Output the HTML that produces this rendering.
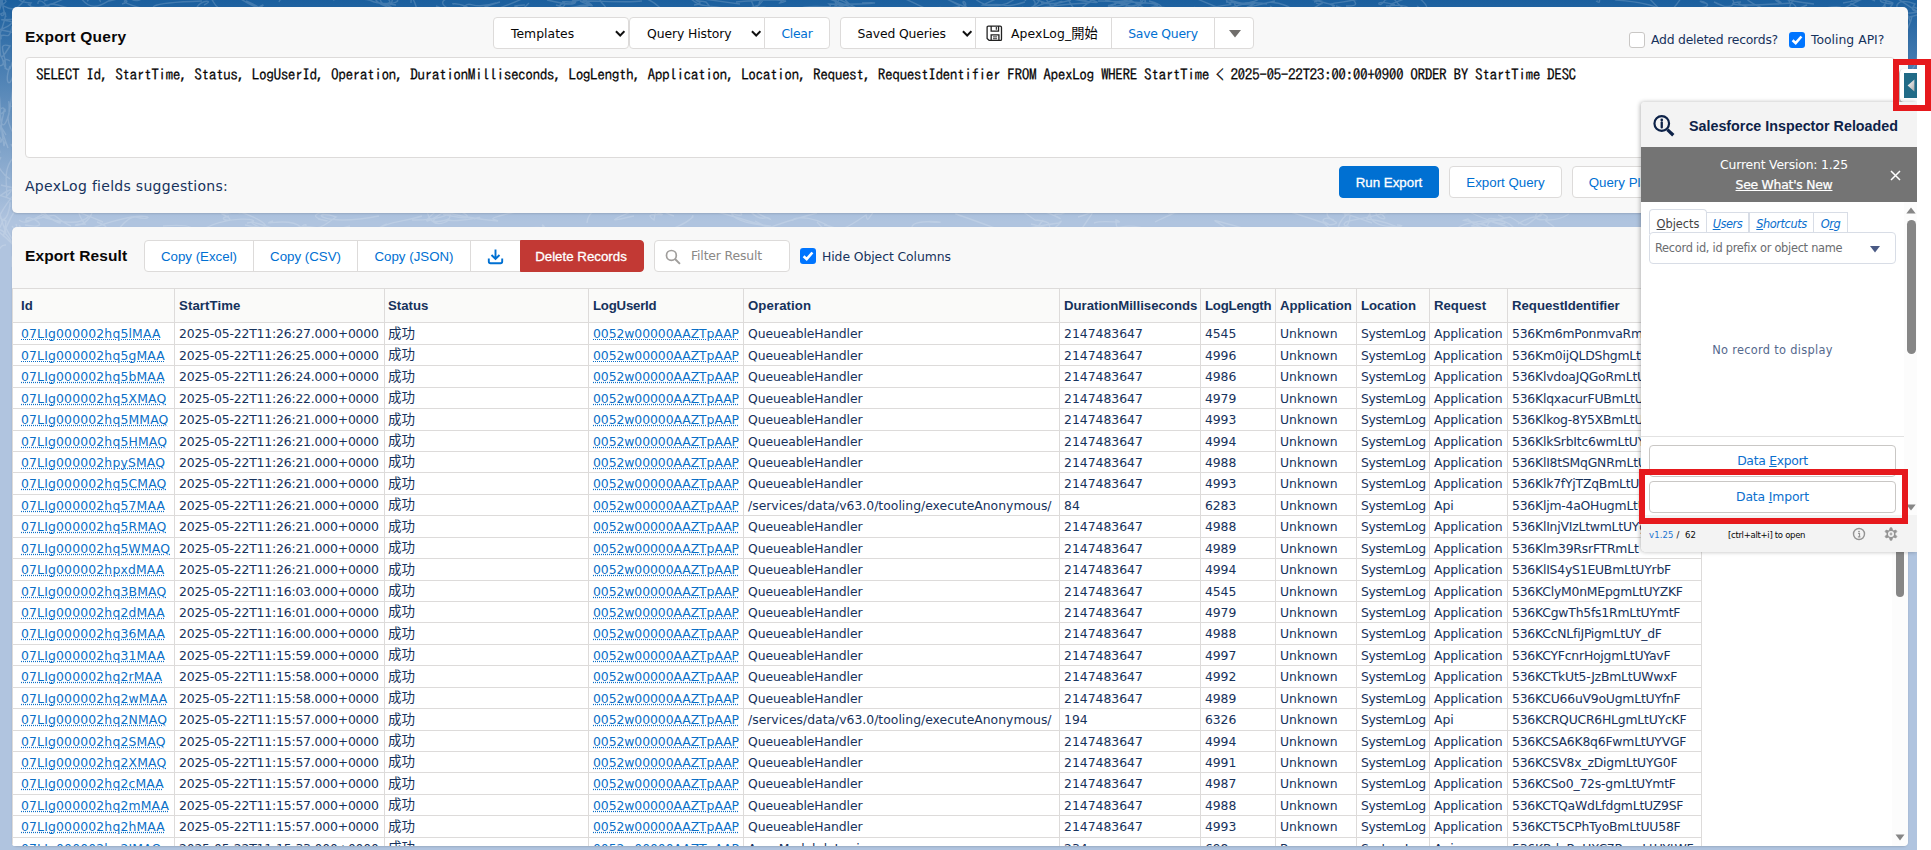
<!DOCTYPE html>
<html><head><meta charset="utf-8"><title>Data Export</title>
<style>
*{box-sizing:border-box;margin:0;padding:0}
html,body{width:1931px;height:850px;overflow:hidden;background:#fff}
body{font-family:"DejaVu Sans","Noto Sans CJK JP",sans-serif;font-size:12.4px;color:#080707;position:relative}
#page{position:absolute;left:0;top:0;width:1917px;height:850px;overflow:hidden;background:#b0c4df linear-gradient(to bottom,#1b5f9e 0,#b0c4df 222px) no-repeat;background-size:100% 222px}
.abs{position:absolute}
.panel{position:absolute;background:#f8f8f8;border-radius:5px;box-shadow:0 1px 2px rgba(0,0,0,.12)}
h1{font-family:"Liberation Sans",sans-serif;position:absolute;font-size:15.5px;font-weight:bold;color:#080707;white-space:nowrap;line-height:20px}
.box{position:absolute;background:#fff;border:1px solid #dddbda;height:32px;top:17px;line-height:31px;white-space:nowrap;font-size:12.4px}
.blue{color:#0070d2}
.btn{font-family:"Liberation Sans",sans-serif;position:absolute;background:#fff;border:1px solid #dddbda;color:#0070d2;text-align:center;white-space:nowrap;font-size:13.3px}
svg{position:absolute;display:block}
table{border-collapse:collapse;position:absolute;left:12px;top:288px;table-layout:fixed;width:1690px;background:#fff}
th,td{border:1px solid #dddbda;padding:0 0 0 4px;white-space:nowrap;overflow:hidden;text-align:left;font-size:12.4px;color:#16325c}
th{font-family:"Liberation Sans",sans-serif;background:#fafaf9;font-weight:bold;color:#16325c;height:34px;font-size:13.2px}
td:first-child,th:first-child{padding-left:8px}
th:nth-child(3){padding-left:3px}
td a{color:#0b6fc7;text-decoration:underline dotted;text-underline-offset:1px}
td.jp{font-size:13.5px;padding-left:3px;position:relative;top:-2px}
td:nth-child(1){letter-spacing:.17px}
td:nth-child(2){letter-spacing:-.18px}
td:nth-child(4){letter-spacing:-.06px}
td:nth-child(5){letter-spacing:-.1px}
td.sv{letter-spacing:0}
td:nth-child(7){letter-spacing:-.09px}
td:nth-child(9){letter-spacing:-.4px}
td:nth-child(10){letter-spacing:-.07px}
td:nth-child(11){letter-spacing:-.21px}
th{letter-spacing:0}
th:nth-child(4),th:nth-child(7){letter-spacing:-.2px}
th:nth-child(2),th:nth-child(5){letter-spacing:.1px}

.tab{border:1px solid #d8dde6;border-bottom:none;background:#fff;font-size:11.4px;letter-spacing:-.45px;line-height:23px;text-align:center;color:#0b6fce;white-space:nowrap}
.pbtn{width:247px;height:32px;border:1px solid #c9c7c5;border-radius:4px;background:#fff;font-size:12.4px;line-height:30px;text-align:center;color:#0b6fce;white-space:nowrap}
</style></head><body>
<div id="page">
<svg style="left:0;top:0" width="1917" height="280" viewBox="0 0 1917 280" fill="none" stroke="#fff" stroke-opacity=".17" stroke-width="1.4"><path d="M862 3c30 -1 1 2 -33 1c9 8 -28 -6 -43 13M1332 -11c34 13 11 3 -36 -20c2 -12 -22 -7 -49 -2M839 10c1 4 -0 5 -4 -9c35 14 24 6 -19 -11M544 -10c19 -3 24 -3 48 15c-35 -8 29 -1 50 -4M122 4c19 -6 -29 -5 49 11c-27 -7 -28 -12 31 -14M1071 -0c-22 6 -26 4 -40 -3c-20 -6 33 8 -21 16M391 -2c25 4 -28 14 -30 -10c19 -5 -14 -12 -43 3M454 4c-9 -1 32 -0 8 15c-22 -10 29 9 -26 -13M1422 12c-21 13 27 3 -8 -17c-32 13 -18 6 -26 14M1143 -4c-23 6 -30 -8 6 15c8 -6 29 -8 -51 -10M849 -10c-23 -4 5 -10 -14 16c34 4 13 2 -38 -20M15 12c14 13 -34 4 -2 10c-13 14 -30 1 25 17M1417 6c21 12 -10 5 42 16c-6 8 25 2 13 -5M1116 4c-29 4 35 11 24 -5c16 2 -4 9 -44 11M38 4c-1 -8 14 -0 12 18c-17 -14 -14 5 -31 -14M1746 5c-4 11 -12 5 -32 -3c21 12 27 -3 9 -8M246 1c24 10 15 13 -23 -14c-3 -6 -20 -2 13 -0M595 10c34 -1 -30 -13 39 -19c15 2 -13 8 -50 -15M867 -11c23 -7 -25 -13 14 -2c9 4 22 13 19 -13M907 -7c-34 -1 15 -9 -24 -6c14 1 8 7 -11 12M1747 -10c30 6 -26 -1 13 17c-9 2 27 8 47 -2M1250 -7c16 9 10 6 -30 17c34 13 3 8 -19 17M1649 -3c-29 -2 4 8 -1 -20c22 -12 21 -9 -17 12M254 -8c1 6 24 5 47 -0c31 -12 -20 1 -22 10M1226 2c24 2 -13 -3 36 17c-20 10 33 1 8 -13M1025 1c7 -13 33 0 -10 13c4 -0 13 -12 4 -4M1846 12c-16 -1 -26 -2 33 17c-2 -5 -22 3 45 -16M1500 -11c-21 -8 13 -5 -15 5c-28 6 -26 0 -26 -13M1014 -1c-9 -2 2 -10 -31 6c10 1 25 3 37 -11M1425 9c28 -5 -13 12 -30 21c27 -10 -18 6 -25 -17M1603 -1c20 -10 -7 5 -51 -13c13 12 33 -11 1 11M960 6c-22 -12 -28 -13 5 1c5 -10 -22 -8 36 21M1787 -10c-31 13 -3 7 -18 -1c1 -2 7 -14 21 14M333 -0c17 -3 -21 -9 1 -20c28 8 14 10 14 -4M1149 1c34 9 -17 12 26 12c22 -3 28 11 20 11M1472 -1c16 -12 -11 -1 -51 -6c10 3 -19 12 17 -7M1267 3c2 -3 35 4 21 11c34 -13 8 7 -26 -4M78 -7c-9 -11 -17 11 5 0c33 2 35 4 33 -18M1145 8c-32 12 -24 -1 -35 -0c8 -12 31 -2 3 4M693 -5c11 2 -15 6 -21 -20c-18 -13 -24 7 -12 17M1439 -11c34 12 -30 11 -7 -1c33 -7 2 12 23 -1M1889 9c7 -11 9 -1 -31 -19c2 -11 -4 5 -5 -10M1115 -1c19 1 35 13 25 -11c-27 11 20 3 -15 -10M1316 3c6 4 18 -9 -26 20c29 11 -32 -12 -24 -3M1196 -9c3 -12 -29 5 5 6c-9 -1 -20 -4 26 14M125 -9c22 3 19 -8 -8 -10c22 -4 11 14 -18 2M1435 12c-5 -4 -28 11 -44 -18c4 -0 13 -6 29 -18M396 5c-29 -5 16 5 -23 -15c-10 6 -9 -11 22 3M1771 12c29 -2 21 -5 -19 -4c30 11 -18 -4 -14 -6M751 -2c-21 2 21 1 35 3c-23 7 27 -6 -50 1M1041 3c33 4 21 -12 5 12c-29 -12 17 11 -44 6M261 7c10 -7 -20 7 2 11c-7 -5 33 5 -1 2M1386 6c29 -3 23 5 37 13c23 11 32 4 3 9M1544 -1c-6 -10 17 14 -13 -14c-21 -2 -15 13 -46 -8M204 5c19 -9 -31 -1 9 17c-32 -11 -22 -8 -28 9M1140 -6c-22 -6 -23 7 -20 2c22 -1 -17 11 43 -7M1047 13c-1 -8 -32 13 32 -5c2 0 -16 14 17 -11M1 0c-9 8 15 3 -36 -14c-12 -7 26 0 14 21M500 2c-24 8 -35 9 36 14c-29 -6 15 -11 -2 -1M1843 3c25 -5 20 -2 44 -17c23 -8 3 1 -36 14M587 -4c-30 -5 -2 6 -15 8c-28 -3 -3 13 35 6M4 -2c15 -7 4 -1 -51 21c21 -8 8 -6 -13 2M562 -3c-8 5 -17 -8 24 -7c31 2 16 -5 34 -17M255 -10c12 6 -22 -3 35 4c-29 -8 -24 -11 -10 -18M1775 -1c1 4 19 9 -12 -7c-6 -14 -7 6 51 12M1267 4c-34 -5 -11 4 -41 -5c1 8 23 3 -36 11M1741 2c-10 0 -25 6 51 1c15 9 -21 12 13 -13M142 -6c5 6 -12 12 -15 -2c-26 13 -26 11 5 3M1073 -5c29 14 22 3 -40 14c-15 11 -18 2 35 -13M1048 -10c-33 -9 34 12 17 -8c12 7 -8 3 32 -20M369 0c-25 -3 5 -9 2 -10c5 -5 10 -13 18 -15M1851 4c-2 -2 9 5 27 11c-1 14 24 10 -10 -3M1084 12c2 1 -5 11 -19 -19c16 11 16 3 26 -8M1137 -10c-26 -1 0 -3 -47 8c2 -7 -14 -3 -28 -18M1757 13c12 10 -6 9 -29 10c5 11 -28 8 -40 2M1834 -12c-18 -6 -12 -12 41 13c-7 -4 6 -13 -49 17M580 1c30 13 -2 -8 -21 18c28 -9 24 -4 -3 -14M1695 14c-21 4 -22 11 -47 -17c16 -5 28 10 22 -15M1337 12c-4 -12 -19 -5 22 -13c-22 -7 12 8 -13 7M1705 3c-19 -6 30 5 -23 6c-29 14 -4 1 3 -19M1149 -5c-17 8 -29 -6 27 -11c-15 1 -22 11 51 -20M880 8c-8 12 -0 -9 6 6c-10 4 20 0 1 15M1314 2c32 -9 20 -9 11 -11c-4 8 20 8 -28 -0M411 3c-0 -13 7 6 8 16c-22 -10 -34 -0 -7 -2M493 9c-30 11 5 1 31 -11c-25 -5 -32 -5 13 1M496 3c-29 9 -23 -7 -36 8c23 8 -31 -3 -14 -12M1873 -11c-1 7 34 -10 -5 10c-32 -7 27 -10 -11 -8M808 -10c-33 14 18 7 -28 -10c4 -7 -3 12 -14 -7M1893 4c-32 -3 10 -12 -16 8c26 3 27 -1 -11 14M723 8c-20 -4 -22 1 -35 -12c-20 -1 -13 -1 52 8M1662 -7c-8 -12 13 -4 -24 -20c-22 -7 -7 12 23 -10M684 -8c31 -4 19 6 43 -20c-12 -3 -29 11 -18 11M993 -11c-7 -7 -32 -10 10 -20c-13 -2 3 -10 22 -10M1395 5c-25 -8 -15 6 -10 -5c26 -8 -15 -4 -30 -19M28 4c5 9 33 -6 18 18c-20 5 12 13 39 -11M1213 -10c-5 -3 -31 -3 -18 -0c-15 -10 -7 -1 -35 7M448 -10c-11 -2 -24 2 21 2c14 -13 -8 -4 -46 -4M87 1c6 -1 -12 -7 -50 -6c27 2 -17 5 -33 -1M1180 13c-10 2 31 8 13 5c-6 -2 -16 9 40 -5M1754 -11c-25 0 -13 -4 50 -15c-22 -8 13 -7 -52 2M748 -6c-0 4 3 3 6 14c33 -5 -11 11 -20 9M1336 6c32 9 -24 3 -1 3c-9 -6 17 1 -28 -11M614 -7c1 -10 -31 -12 -42 9c-27 -1 19 -1 -35 15M1676 -11c-17 0 21 -3 23 -10c15 -5 -12 7 36 14M1087 -1c14 3 23 8 -39 -5c12 -8 -22 -14 9 19M1872 -9c13 -2 9 -3 46 21c-32 6 -27 -13 -22 10M1918 -9c-12 -13 3 -0 -13 -8c21 9 -15 -3 12 11M1893 -2c14 1 21 -10 -34 -17c30 -7 -1 -11 -19 -20M1084 -8c9 -6 -19 -0 -14 -10c-31 -12 27 -5 -44 -13M923 14c-21 10 -1 -2 32 -4c-31 1 11 3 -23 18M1666 14c-4 9 16 -9 -50 -14c-27 -12 -10 7 -20 1M0 -7c32 -14 2 9 31 10c-7 8 23 7 51 -17M1833 -2c14 -7 29 -13 8 -11c-8 -4 11 9 -14 6M670 -5c28 -5 -28 -5 25 -12c17 1 13 -9 -41 -15M663 -1c-34 0 -7 -5 4 19c-21 11 -13 7 -41 20M819 13c-20 -3 14 -9 -24 7c31 -5 -22 -4 51 -15M1218 -2c10 -8 8 11 37 5c0 2 -27 9 20 -2M1278 -1c-8 -8 7 2 2 -20c9 -1 7 3 45 -15M894 14c17 -5 17 14 -10 15c-26 14 -1 -7 36 6M1809 10c21 0 35 -12 39 9c-17 9 -3 1 38 -13M525 5c-30 2 20 -0 -27 13c25 8 3 11 31 -15M693 -9c-32 -4 26 9 -40 -13c-8 10 8 11 -45 20M383 4c26 6 -21 5 -7 -20c-11 -5 9 -6 11 8M332 -9c14 -1 -26 -11 46 5c-10 -9 35 5 25 -6M585 -1c-25 4 -5 9 -10 -2c0 12 -11 6 -28 3M536 11c-15 10 12 -1 46 -5c17 3 -4 -12 -8 -9M840 13c-14 5 12 -7 -9 -15c28 -7 -6 -4 34 15M1132 2c-28 11 -29 -4 -13 9c12 -4 28 13 -50 6M895 -3c-2 -5 12 3 49 20c34 -3 23 4 21 21M110 0c-7 4 -20 14 -31 -5c-25 -3 17 -12 -35 6M1195 7c-17 9 16 8 -40 -1c-34 10 31 11 -50 -6M1025 2c-27 8 -14 0 -39 3c-26 -12 1 -6 29 -11M787 -11c-20 -1 4 -1 37 -17c25 -10 33 1 -10 5M1665 13c-6 -14 -24 9 25 9c-24 1 -33 -11 -21 20M1234 10c-32 -2 -30 -7 -41 18c-12 -0 11 11 47 3M957 12c-7 -6 17 -7 -14 -3c-2 -4 -5 -1 -47 14M100 2c3 -3 -19 -11 -13 -8c-1 -8 17 -0 -52 -4M1864 -12c7 13 -9 3 -14 -8c8 3 -13 -0 2 11M83 -10c-17 -6 21 -2 38 -4c-15 5 -29 14 35 -7M599 9c20 4 -31 7 -47 5c4 12 10 -13 46 11M1111 -12c17 -2 13 14 44 -18c20 -2 18 -3 -5 -3M210 -4c16 -12 -27 9 17 2c-27 -11 -13 13 6 18M392 -1c3 9 -26 10 -3 -20c-5 -3 12 12 -1 8M737 8c-28 7 -23 2 -31 -6c-24 -4 6 1 -12 3M1622 -3c6 -1 34 -5 21 -11c-17 6 5 -7 -46 14M716 7c-5 3 4 13 43 -2c-1 -8 18 -11 -20 15M48 6c5 1 -12 -10 47 11c21 -11 20 -8 -32 1M1169 -9c19 2 28 12 20 -6c32 6 -15 10 24 -10M466 -11c3 -7 -14 -7 -39 -1c-16 -6 -16 0 39 -14M1656 10c8 1 16 1 17 18c19 -7 -31 12 -14 12M435 219c-9 6 31 0 7 -6c-19 13 -27 12 17 -18M1738 209c5 -11 34 -5 39 -18c12 -12 -33 2 51 8M1648 228c1 -12 2 -9 3 -6c-0 -8 14 -2 -1 -18M930 222c33 2 -26 -6 -17 8c31 13 31 12 38 18M19 220c6 5 8 3 45 -17c1 13 -33 -11 39 19M27 207c23 5 1 2 27 13c-35 -12 21 13 35 -4M634 216c-34 8 -17 2 3 -7c12 -1 -19 11 -34 -15M474 219c20 -5 -18 4 -25 1c-17 11 -22 -7 -21 -7M1397 225c20 1 -29 7 -27 -12c-6 14 -9 -4 43 21M735 210c20 8 -11 8 -13 -9c7 7 -2 9 -51 -0M722 208c29 -10 -21 11 48 18c-11 12 -25 6 47 -13M245 225c27 6 31 -1 -13 -16c-16 12 -30 -9 -16 -19M579 211c-26 1 3 2 28 1c31 -12 -19 -12 -20 11M1782 220c-24 -5 5 -6 31 20c-3 3 24 -1 -32 19M1887 207c18 -3 -31 -9 -34 10c-20 -13 -20 8 -0 6M887 211c-34 -5 -32 -7 12 -5c-2 3 -13 -4 40 3M793 221c-3 -5 29 -7 46 15c27 -9 1 14 -22 -14M1391 213c6 -10 31 -6 -42 8c-11 2 -0 12 1 -5M-17 220c-16 2 9 -1 -43 -0c-1 4 33 -6 -6 -17M1540 213c23 8 -17 11 0 -3c4 12 -1 -0 -22 14M961 216c-21 -8 23 8 50 18c13 8 15 9 32 -14M1569 214c-18 12 -33 0 -16 12c8 12 30 4 -46 7M193 234c26 -5 -22 5 27 20c9 -10 16 -12 39 11M1511 230c5 12 10 -0 -12 -6c-33 -9 21 -8 16 12M1334 220c-13 -6 -22 4 20 19c-12 12 29 -6 47 5M1857 228c-12 -6 2 -0 -49 15c2 -1 17 -7 -32 3M451 215c-30 -13 -10 1 47 6c-6 -3 -19 -1 48 -16M824 225c18 2 10 12 42 -10c3 14 2 -9 28 -19M273 221c-16 6 16 -5 28 6c14 -1 -5 -11 -3 19M1712 208c-30 -6 14 -2 -39 -3c5 7 -7 4 19 5M71 226c-26 -12 -2 -14 -45 -5c-2 -11 32 10 -1 4M595 234c-27 -5 -20 10 1 -4c-7 11 -17 8 22 -2M693 218c-3 -5 9 -2 -21 11c-3 -1 27 -1 -13 17M1884 228c-7 5 17 -6 24 19c11 5 -5 4 -29 11M1031 233c-11 6 -34 -2 28 -10c8 -8 -7 14 -32 17M97 222c22 9 -8 3 22 11c17 2 -17 6 6 2M1905 210c20 -5 16 13 -24 3c2 -0 -23 4 41 7M544 229c-6 -10 7 -1 3 21c5 13 -10 7 -45 -8M1329 225c23 -3 -16 -4 4 -20c-9 4 -25 -5 39 18M467 211c-27 -12 21 7 -25 -0c14 -13 22 10 -30 9M1344 215c26 -8 -2 -5 -6 13c5 3 34 -8 -29 5M273 233c-11 -2 -5 9 44 7c-23 -4 14 -8 40 16M422 216c-19 6 -32 5 -46 14c3 2 -28 -13 -15 20M1150 230c-31 -11 -34 6 -34 -10c12 5 -12 -1 -22 3M674 216c-18 -6 -17 -14 -20 4c-16 -11 24 -1 1 -8M1710 227c9 4 13 0 -9 -5c0 -1 2 1 30 16M417 207c-14 -13 21 3 -23 -13c26 9 13 5 26 -2M755 221c27 14 29 9 -45 -11c33 1 1 -5 38 1M1911 208c35 -14 -25 -3 15 -16c4 12 -5 7 10 3M318 219c28 5 -20 -1 5 -7c5 4 -34 -8 16 -12M122 227c-12 13 4 -11 14 -10c22 6 18 -12 -49 13M254 212c-33 -9 -2 13 -19 -10c23 -9 9 3 46 -19M1078 217c23 -7 15 -9 -1 20c-18 -6 29 5 -46 -13M443 214c24 6 34 5 13 -5c15 -0 -31 -0 -12 1M75 207c34 -4 -12 -10 10 17c-22 0 -0 7 7 -11M350 226c-30 10 -33 -9 -3 14c8 7 18 6 -47 14M268 211c-32 -13 26 -3 -43 -19c24 3 29 -13 -41 -9M352 209c-21 4 -23 -9 4 -5c-25 2 1 -3 -3 -19M1179 211c-11 -14 27 2 -11 2c31 -10 -8 6 -13 9M1751 207c-15 -6 18 8 21 18c-22 -3 25 7 -41 20M1424 230c-10 3 32 11 8 16c35 9 11 13 -37 -4M1080 210c20 -12 9 -6 -19 4c-22 -1 25 14 -25 -6M1333 211c24 -8 4 -4 -52 -21c-35 -5 -16 14 14 -18M1376 213c-1 6 25 12 -8 -8c-7 -5 17 -1 19 -15M1506 233c-21 3 -24 -13 -9 -13c16 2 12 13 -46 -17M50 219c23 5 3 10 -13 -16c10 -13 -19 -13 -36 -18M1017 210c7 9 -11 -11 18 10c27 2 6 10 19 20M540 228c9 -1 -34 -1 -25 4c1 0 -31 -10 11 8M1912 228c-15 -1 0 9 -11 18c-1 -3 -1 -4 52 -19M759 208c12 -10 -25 -2 11 11c-4 -6 -9 11 -30 -21M1707 220c-26 -10 27 7 -46 7c-20 -2 7 -13 46 -7M261 228c-27 -13 11 -1 42 12c-21 -13 7 -1 -21 18M387 224c-30 12 31 3 -19 9c28 8 -32 0 -38 2M1833 230c-18 1 -13 -9 26 11c-11 -2 14 6 -4 -16M166 211c23 -0 10 -4 -14 -14c33 3 -26 6 10 5M1481 223c26 13 -7 4 -13 -4c-9 4 -10 -4 36 13M1299 230c-8 4 -17 -5 -42 13c29 -6 -9 -11 -38 6M1719 208c-17 7 -19 11 -15 -1c-21 -6 -5 -6 24 -20M1226 228c-12 -9 -27 -12 31 4c-34 -1 7 -5 -49 -3M669 233c-10 12 26 2 -39 13c-29 2 -28 -11 -9 -14M1914 222c28 13 18 4 -3 12c12 -10 2 -2 2 9M1324 222c20 9 -29 -10 -48 -14c32 -5 -4 -1 7 -9M1498 215c24 8 -35 1 -43 16c-30 -7 19 3 18 -4M995 212c-3 -7 12 -11 -38 -13c2 2 -35 14 35 -5M290 229c33 -9 18 9 46 -12c-27 -9 -19 11 43 -1M229 216c-18 4 15 8 -7 -2c-2 -4 -3 5 22 -7M1085 210c-32 -3 -10 -13 -44 -3c31 9 -33 -5 -14 -8M247 223c24 -3 -23 -11 -51 11c-19 6 20 -12 -33 -8M1479 227c-14 -1 -10 -1 31 -10c22 12 7 13 46 -14M1913 212c21 -11 -14 -2 36 8c-21 11 26 0 -47 -9M-3 113c12 6 9 -26 -11 21c-4 -16 -12 -27 -4 4M-0 153c-6 -29 5 -10 -0 -11c-6 -27 -6 -12 -16 -42M2 5c11 -8 -2 2 -20 -36c8 3 -0 -9 11 0M12 226c11 14 5 -2 1 7c1 19 10 -27 11 10M6 245c-13 -1 -3 27 -14 6c-10 15 -0 14 -8 35M-12 61c7 23 8 -13 -18 19c6 -26 12 2 -20 -2M-2 28c11 26 -11 -3 -10 16c-11 -10 -3 -2 -3 9M16 252c11 20 -8 -15 -2 13c3 -9 14 -11 -20 -37M-6 197c10 -27 -7 -15 12 36c-7 -24 13 28 9 -2M10 207c0 -14 1 10 -7 13c-10 28 -8 -16 19 41M16 227c10 19 2 -26 10 30c9 -27 -12 14 -1 35M18 121c5 10 5 -8 6 -39c11 13 8 -2 -12 -4M8 148c-11 -30 -3 -15 -11 -25c-2 12 12 11 -20 33M6 198c3 -9 -5 -26 7 -40c5 25 5 6 13 41M12 267c-1 -29 3 8 15 10c-4 -30 9 7 20 8M14 209c14 -2 11 -6 -21 -16c-4 30 -3 -14 8 -36M-3 107c-11 6 -2 18 -7 43c-9 2 -8 -29 -8 36M-3 132c1 -14 1 -26 -6 -19c9 16 6 6 15 22M-10 35c7 20 14 17 -14 6c3 6 -10 28 0 -21M17 104c-12 10 -7 -17 -8 10c-5 10 11 29 16 38M-4 222c-11 5 -12 -24 19 -34c6 2 -14 18 -18 35M13 134c-2 -28 6 -28 1 38c5 -23 6 12 -7 24M5 112c1 -13 -6 23 -6 24c-4 -19 -14 28 11 43M6 17c-9 -27 3 7 19 -18c-7 -17 -10 -28 -0 -7M-1 257c-5 20 1 -24 -20 10c10 -27 6 -16 8 30M10 66c-10 28 12 25 2 -40c-4 25 -12 -12 -19 34M-1 22c-4 -18 -2 7 7 -36c1 -27 -2 18 -10 29M-5 106c8 -30 2 2 9 40c5 -17 -8 -1 -9 5M-9 187c-2 -27 -11 26 15 34c-3 29 -9 14 19 -26M-12 34c-12 18 3 -1 -16 13c-10 -22 3 9 13 29M-8 82c-10 -1 -13 22 8 28c-0 25 9 20 13 -26M-2 15c7 -2 14 -13 -3 33c13 15 11 25 -10 11M-10 183c13 0 -10 4 -18 -3c-12 -5 9 14 15 -4M1 15c8 4 -3 -21 -2 -39c-11 -25 -2 -22 14 10M14 149c-10 -13 10 5 6 12c-13 -18 -2 21 19 8M-4 13c2 -5 12 -18 -12 -44c-13 18 10 -21 -20 7M-5 166c12 15 -6 6 -9 23c-7 22 5 24 -6 41M5 69c4 -11 -11 -28 5 -23c-11 17 -10 15 -10 -12M16 224c9 29 3 26 5 7c-5 -7 2 -15 6 33M10 61c-13 -8 -2 21 2 2c3 3 5 3 2 -24M1905 119c11 27 -6 4 1 -4c-9 17 -12 -16 -9 -27M1906 22c1 -20 4 6 5 -2c3 -12 -1 11 -12 21M1915 263c3 3 8 -13 -5 -6c7 13 -9 27 20 -0M1925 168c-3 -25 -14 5 9 10c8 -4 7 6 6 4M1917 151c-11 10 6 -4 20 -2c-9 1 -4 -20 16 -29M1918 46c0 30 -12 22 -21 43c11 -3 4 -2 -14 -13M1912 235c-11 2 -1 3 12 9c-5 27 3 -14 2 33M1903 175c-0 -13 -10 -16 -3 -7c3 -14 3 -2 12 27M1907 264c1 -10 -7 13 -3 17c-7 22 -7 22 -3 -9M1915 141c1 4 13 15 -17 44c-14 -27 9 -13 -20 -29M1913 228c-13 -20 -14 -27 -8 -1c13 9 10 5 17 16M1908 101c-1 -23 12 -1 -13 -1c9 -14 2 -25 -11 -28M1914 186c-8 11 2 15 21 -15c14 -3 0 -19 -17 13M1904 9c-12 3 -9 -14 11 -5c-10 11 14 7 -2 3M1918 226c8 -15 8 -24 -16 1c-9 4 -6 27 -3 28M1924 122c8 -0 -3 -23 7 38c5 -11 1 -9 -5 25M1902 130c0 -21 7 -15 -4 -23c3 -4 5 -4 12 5M1904 133c-7 -12 13 -1 10 -31c4 -23 -8 -22 -20 37M1924 99c-14 14 5 -27 11 -39c-7 17 7 -16 0 27M1916 142c-9 -26 -9 1 4 -4c4 4 4 -5 14 3M1922 266c9 16 5 3 -11 -36c5 -15 3 3 5 -6M1908 82c6 23 -5 -11 -2 -6c4 15 7 19 9 42M1912 121c4 -11 9 -5 2 2c-4 -29 -6 -1 19 -33M1923 263c8 -13 -13 23 -18 -18c12 10 9 20 -14 0M1904 102c-0 19 -6 10 -15 -22c-12 5 2 13 -3 39M1919 153c10 -19 -6 3 4 41c5 -27 12 -2 -12 24M1916 231c1 -15 -1 -2 -6 7c-10 -15 -11 -28 1 21M1911 244c3 10 -6 24 -6 31c-7 27 5 -19 10 -31M1911 102c-5 -8 -10 -6 -17 27c-4 13 -2 28 16 18M1921 247c12 -5 3 -26 -6 -15c3 -30 7 -26 -3 -1"/></svg>

<!-- top panel -->
<div class="panel" style="left:12.3px;top:7px;width:1895.5px;height:206.3px"></div>
<h1 style="left:25px;top:27px;letter-spacing:.26px">Export Query</h1>

<div class="box" style="left:493px;width:136px;border-radius:4px;padding-left:17px;letter-spacing:.02px">Templates<svg style="right:3px;top:11.6px" width="10.4" height="7.6" viewBox="0 0 11 8"><path d="M1 1.3 L5.5 5.8 L10 1.3" fill="none" stroke="#111" stroke-width="2.1"/></svg></div>
<div class="box" style="left:629px;width:136px;border-radius:4px 0 0 4px;padding-left:17px;letter-spacing:-.1px">Query History<svg style="right:3px;top:11.6px" width="10.4" height="7.6" viewBox="0 0 11 8"><path d="M1 1.3 L5.5 5.8 L10 1.3" fill="none" stroke="#111" stroke-width="2.1"/></svg></div>
<div class="box blue" style="left:764px;width:66px;border-radius:0 4px 4px 0;text-align:center;letter-spacing:-.28px">Clear</div>
<div class="box" style="left:840px;width:136px;border-radius:4px 0 0 4px;padding-left:16.5px;letter-spacing:-.13px">Saved Queries<svg style="right:3px;top:11.6px" width="10.4" height="7.6" viewBox="0 0 11 8"><path d="M1 1.3 L5.5 5.8 L10 1.3" fill="none" stroke="#111" stroke-width="2.1"/></svg></div>
<div class="box" style="left:975px;width:137px;padding-left:35px;letter-spacing:.1px">ApexLog_<span style="font-size:13.2px">開始</span><svg style="left:10px;top:6.5px" width="16.6" height="16.6" viewBox="0 0 18 18"><path d="M1.2 2.6 Q1.2 1.2 2.6 1.2 H15.4 Q16.8 1.2 16.8 2.6 V15.4 Q16.8 16.8 15.4 16.8 H3.6 L1.2 14.6 Z" fill="none" stroke="#222" stroke-width="1.4" stroke-linejoin="round"/><path d="M5.6 1.2 V6.6 H13.6 V1.2" fill="none" stroke="#222" stroke-width="1.4"/><path d="M5.6 16.8 V10.6 H14 V16.8" fill="none" stroke="#222" stroke-width="1.4"/><path d="M7.6 12.9 H12 M7.6 14.9 H12" stroke="#222" stroke-width="1"/><path d="M11.2 2.2 V5.2" stroke="#222" stroke-width="1.2"/></svg></div>
<div class="box blue" style="left:1111px;width:104px;text-align:center;letter-spacing:-.25px">Save Query</div>
<div class="box" style="left:1214px;width:40px;border-radius:0 4px 4px 0"><svg style="left:14px;top:12px" width="12" height="8" viewBox="0 0 12 8"><path d="M0 0 H12 L6 7.5 Z" fill="#706e6b"/></svg></div>

<div class="abs" style="left:1629px;top:32px;width:16px;height:16px;border:1px solid #c9c7c5;border-radius:3px;background:#fff"></div>
<div class="abs" style="left:1651px;top:30px;line-height:20px;white-space:nowrap;color:#16325c;letter-spacing:-.22px">Add deleted records?</div>
<div class="abs" style="left:1789px;top:32px;width:16px;height:16px;border-radius:3px;background:#0075ff"><svg style="left:2px;top:3px" width="12" height="10" viewBox="0 0 12 10"><path d="M1.6 5.2 L4.7 8.1 L10.4 1.5" fill="none" stroke="#fff" stroke-width="2.6"/></svg></div>
<div class="abs" style="left:1811px;top:30px;line-height:20px;white-space:nowrap;color:#16325c;letter-spacing:0">Tooling API?</div>

<div class="abs" id="ta" style="left:25px;top:57.4px;width:1870px;height:100.4px;background:#fff;border:1px solid #dddbda;border-radius:4px;font-family:'IPAGothic','Liberation Mono',monospace;font-size:15.4px;letter-spacing:-.5px;-webkit-text-stroke:.2px #080707;line-height:17px;padding:8px 0 0 10px;white-space:nowrap;color:#080707;overflow:hidden">SELECT Id, StartTime, Status, LogUserId, Operation, DurationMilliseconds, LogLength, Application, Location, Request, RequestIdentifier FROM ApexLog WHERE StartTime &lt; 2025-05-22T23:00:00+0900 ORDER BY StartTime DESC</div>

<div class="abs" style="left:25px;top:176px;line-height:20px;font-size:14px;letter-spacing:.29px;color:#16325c;white-space:nowrap">ApexLog fields suggestions:</div>

<div class="btn" style="left:1339px;top:166px;width:100px;height:32px;line-height:31px;background:#0070d2;border-color:#0070d2;color:#fff;-webkit-text-stroke:.3px #fff;border-radius:4px">Run Export</div>
<div class="btn" style="left:1449px;top:166px;width:113px;height:32px;line-height:31px;border-radius:4px">Export Query</div>
<div class="btn" style="left:1572px;top:166px;width:100px;height:32px;line-height:31px;border-radius:4px">Query Plan</div>

<!-- result panel -->
<div class="panel" style="left:12.3px;top:226.6px;width:1895.5px;height:619.4px"></div>
<h1 style="left:25px;top:246px;letter-spacing:.12px">Export Result</h1>
<div class="btn" style="left:144px;top:240px;width:110px;height:32px;line-height:31px;border-radius:4px 0 0 4px">Copy (Excel)</div>
<div class="btn" style="left:253px;top:240px;width:105px;height:32px;line-height:31px">Copy (CSV)</div>
<div class="btn" style="left:357px;top:240px;width:114px;height:32px;line-height:31px">Copy (JSON)</div>
<div class="btn" style="left:470px;top:240px;width:51px;height:32px"><svg style="left:16px;top:7px" width="17" height="17" viewBox="0 0 17 17"><path d="M8.5 1.5 V10.5 M4.5 7 L8.5 11 L12.5 7" fill="none" stroke="#0070d2" stroke-width="1.9"/><path d="M1.8 10.5 V13.5 Q1.8 15.2 3.5 15.2 H13.5 Q15.2 15.2 15.2 13.5 V10.5" fill="none" stroke="#0070d2" stroke-width="1.9"/></svg></div>
<div class="btn" style="left:520px;top:240px;width:124px;height:32px;line-height:31px;padding-right:2px;background:#c23934;border-color:#c23934;color:#fff;-webkit-text-stroke:.3px #fff;border-radius:0 4px 4px 0">Delete Records</div>
<div class="abs" style="left:654px;top:240px;width:136px;height:32px;background:#fff;border:1px solid #dddbda;border-radius:4px;line-height:30px;padding-left:36px;color:#8a8886;white-space:nowrap;letter-spacing:-.15px">Filter Result<svg style="left:10px;top:7.5px" width="16" height="16" viewBox="0 0 15 15"><circle cx="6" cy="6" r="4.6" fill="none" stroke="#a09e9c" stroke-width="1.6"/><path d="M9.4 9.4 L14 14" stroke="#a09e9c" stroke-width="1.8"/></svg></div>
<div class="abs" style="left:800px;top:248px;width:16px;height:16px;border-radius:3px;background:#0075ff"><svg style="left:2px;top:3px" width="12" height="10" viewBox="0 0 12 10"><path d="M1.6 5.2 L4.7 8.1 L10.4 1.5" fill="none" stroke="#fff" stroke-width="2.6"/></svg></div>
<div class="abs" style="left:822px;top:247px;line-height:20px;white-space:nowrap;color:#16325c;letter-spacing:-.08px">Hide Object Columns</div>

<div class="abs" style="left:12.3px;top:288px;width:1881px;height:558px;overflow:hidden;background:#fff;border-radius:0 0 0 3px">
<table style="left:-.3px;top:0">
<colgroup><col style="width:162px"><col style="width:210px"><col style="width:204px"><col style="width:155px"><col style="width:316px"><col style="width:141px"><col style="width:75px"><col style="width:81px"><col style="width:73px"><col style="width:78px"><col style="width:194px"></colgroup>
<thead><tr><th>Id</th><th>StartTime</th><th>Status</th><th>LogUserId</th><th>Operation</th><th>DurationMilliseconds</th><th>LogLength</th><th>Application</th><th>Location</th><th>Request</th><th>RequestIdentifier</th></tr></thead>
<tbody>
<tr style="height:22px"><td><a>07LIg000002hq5lMAA</a></td><td>2025-05-22T11:26:27.000+0000</td><td class="jp">成功</td><td><a>0052w00000AAZTpAAP</a></td><td>QueueableHandler</td><td>2147483647</td><td>4545</td><td>Unknown</td><td>SystemLog</td><td>Application</td><td>536Km6mPonmvaRmLtUYxyF</td></tr>
<tr style="height:21px"><td><a>07LIg000002hq5gMAA</a></td><td>2025-05-22T11:26:25.000+0000</td><td class="jp">成功</td><td><a>0052w00000AAZTpAAP</a></td><td>QueueableHandler</td><td>2147483647</td><td>4996</td><td>Unknown</td><td>SystemLog</td><td>Application</td><td>536Km0ijQLDShgmLtUYuWF</td></tr>
<tr style="height:22px"><td><a>07LIg000002hq5bMAA</a></td><td>2025-05-22T11:26:24.000+0000</td><td class="jp">成功</td><td><a>0052w00000AAZTpAAP</a></td><td>QueueableHandler</td><td>2147483647</td><td>4986</td><td>Unknown</td><td>SystemLog</td><td>Application</td><td>536KlvdoaJQGoRmLtUYsKF</td></tr>
<tr style="height:21px"><td><a>07LIg000002hq5XMAQ</a></td><td>2025-05-22T11:26:22.000+0000</td><td class="jp">成功</td><td><a>0052w00000AAZTpAAP</a></td><td>QueueableHandler</td><td>2147483647</td><td>4979</td><td>Unknown</td><td>SystemLog</td><td>Application</td><td>536KlqxacurFUBmLtUYpMF</td></tr>
<tr style="height:22px"><td><a>07LIg000002hq5MMAQ</a></td><td>2025-05-22T11:26:21.000+0000</td><td class="jp">成功</td><td><a>0052w00000AAZTpAAP</a></td><td>QueueableHandler</td><td>2147483647</td><td>4993</td><td>Unknown</td><td>SystemLog</td><td>Application</td><td>536Klkog-8Y5XBmLtUYn2F</td></tr>
<tr style="height:21px"><td><a>07LIg000002hq5HMAQ</a></td><td>2025-05-22T11:26:21.000+0000</td><td class="jp">成功</td><td><a>0052w00000AAZTpAAP</a></td><td>QueueableHandler</td><td>2147483647</td><td>4994</td><td>Unknown</td><td>SystemLog</td><td>Application</td><td>536KlkSrbItc6wmLtUYmaF</td></tr>
<tr style="height:21px"><td><a>07LIg000002hpySMAQ</a></td><td>2025-05-22T11:26:21.000+0000</td><td class="jp">成功</td><td><a>0052w00000AAZTpAAP</a></td><td>QueueableHandler</td><td>2147483647</td><td>4988</td><td>Unknown</td><td>SystemLog</td><td>Application</td><td>536KlI8tSMqGNRmLtUYkPF</td></tr>
<tr style="height:22px"><td><a>07LIg000002hq5CMAQ</a></td><td>2025-05-22T11:26:21.000+0000</td><td class="jp">成功</td><td><a>0052w00000AAZTpAAP</a></td><td>QueueableHandler</td><td>2147483647</td><td>4993</td><td>Unknown</td><td>SystemLog</td><td>Application</td><td>536Klk7fYjTZqBmLtUYjeF</td></tr>
<tr style="height:21px"><td><a>07LIg000002hq57MAA</a></td><td>2025-05-22T11:26:21.000+0000</td><td class="jp">成功</td><td><a>0052w00000AAZTpAAP</a></td><td class="sv">/services/data/v63.0/tooling/executeAnonymous/</td><td>84</td><td>6283</td><td>Unknown</td><td>SystemLog</td><td>Api</td><td>536Kljm-4aOHugmLtUYh3F</td></tr>
<tr style="height:22px"><td><a>07LIg000002hq5RMAQ</a></td><td>2025-05-22T11:26:21.000+0000</td><td class="jp">成功</td><td><a>0052w00000AAZTpAAP</a></td><td>QueueableHandler</td><td>2147483647</td><td>4988</td><td>Unknown</td><td>SystemLog</td><td>Application</td><td>536KlInjVIzLtwmLtUYgVF</td></tr>
<tr style="height:21px"><td><a>07LIg000002hq5WMAQ</a></td><td>2025-05-22T11:26:21.000+0000</td><td class="jp">成功</td><td><a>0052w00000AAZTpAAP</a></td><td>QueueableHandler</td><td>2147483647</td><td>4989</td><td>Unknown</td><td>SystemLog</td><td>Application</td><td>536Klm39RsrFTRmLt</td></tr>
<tr style="height:22px"><td><a>07LIg000002hpxdMAA</a></td><td>2025-05-22T11:26:21.000+0000</td><td class="jp">成功</td><td><a>0052w00000AAZTpAAP</a></td><td>QueueableHandler</td><td>2147483647</td><td>4994</td><td>Unknown</td><td>SystemLog</td><td>Application</td><td>536KlIS4yS1EUBmLtUYrbF</td></tr>
<tr style="height:21px"><td><a>07LIg000002hq3BMAQ</a></td><td>2025-05-22T11:16:03.000+0000</td><td class="jp">成功</td><td><a>0052w00000AAZTpAAP</a></td><td>QueueableHandler</td><td>2147483647</td><td>4545</td><td>Unknown</td><td>SystemLog</td><td>Application</td><td>536KClyM0nMEpgmLtUYZKF</td></tr>
<tr style="height:21px"><td><a>07LIg000002hq2dMAA</a></td><td>2025-05-22T11:16:01.000+0000</td><td class="jp">成功</td><td><a>0052w00000AAZTpAAP</a></td><td>QueueableHandler</td><td>2147483647</td><td>4979</td><td>Unknown</td><td>SystemLog</td><td>Application</td><td>536KCgwTh5fs1RmLtUYmtF</td></tr>
<tr style="height:22px"><td><a>07LIg000002hq36MAA</a></td><td>2025-05-22T11:16:00.000+0000</td><td class="jp">成功</td><td><a>0052w00000AAZTpAAP</a></td><td>QueueableHandler</td><td>2147483647</td><td>4988</td><td>Unknown</td><td>SystemLog</td><td>Application</td><td>536KCcNLfiJPigmLtUY_dF</td></tr>
<tr style="height:21px"><td><a>07LIg000002hq31MAA</a></td><td>2025-05-22T11:15:59.000+0000</td><td class="jp">成功</td><td><a>0052w00000AAZTpAAP</a></td><td>QueueableHandler</td><td>2147483647</td><td>4997</td><td>Unknown</td><td>SystemLog</td><td>Application</td><td>536KCYFcnrHojgmLtUYavF</td></tr>
<tr style="height:22px"><td><a>07LIg000002hq2rMAA</a></td><td>2025-05-22T11:15:58.000+0000</td><td class="jp">成功</td><td><a>0052w00000AAZTpAAP</a></td><td>QueueableHandler</td><td>2147483647</td><td>4992</td><td>Unknown</td><td>SystemLog</td><td>Application</td><td>536KCTkUt5-JzBmLtUWwxF</td></tr>
<tr style="height:21px"><td><a>07LIg000002hq2wMAA</a></td><td>2025-05-22T11:15:58.000+0000</td><td class="jp">成功</td><td><a>0052w00000AAZTpAAP</a></td><td>QueueableHandler</td><td>2147483647</td><td>4989</td><td>Unknown</td><td>SystemLog</td><td>Application</td><td>536KCU66uV9oUgmLtUYfnF</td></tr>
<tr style="height:22px"><td><a>07LIg000002hq2NMAQ</a></td><td>2025-05-22T11:15:57.000+0000</td><td class="jp">成功</td><td><a>0052w00000AAZTpAAP</a></td><td class="sv">/services/data/v63.0/tooling/executeAnonymous/</td><td>194</td><td>6326</td><td>Unknown</td><td>SystemLog</td><td>Api</td><td>536KCRQUCR6HLgmLtUYcKF</td></tr>
<tr style="height:21px"><td><a>07LIg000002hq2SMAQ</a></td><td>2025-05-22T11:15:57.000+0000</td><td class="jp">成功</td><td><a>0052w00000AAZTpAAP</a></td><td>QueueableHandler</td><td>2147483647</td><td>4994</td><td>Unknown</td><td>SystemLog</td><td>Application</td><td>536KCSA6K8q6FwmLtUYVGF</td></tr>
<tr style="height:21px"><td><a>07LIg000002hq2XMAQ</a></td><td>2025-05-22T11:15:57.000+0000</td><td class="jp">成功</td><td><a>0052w00000AAZTpAAP</a></td><td>QueueableHandler</td><td>2147483647</td><td>4991</td><td>Unknown</td><td>SystemLog</td><td>Application</td><td>536KCSV8x_zDigmLtUYG0F</td></tr>
<tr style="height:22px"><td><a>07LIg000002hq2cMAA</a></td><td>2025-05-22T11:15:57.000+0000</td><td class="jp">成功</td><td><a>0052w00000AAZTpAAP</a></td><td>QueueableHandler</td><td>2147483647</td><td>4987</td><td>Unknown</td><td>SystemLog</td><td>Application</td><td>536KCSo0_72s-gmLtUYmtF</td></tr>
<tr style="height:21px"><td><a>07LIg000002hq2mMAA</a></td><td>2025-05-22T11:15:57.000+0000</td><td class="jp">成功</td><td><a>0052w00000AAZTpAAP</a></td><td>QueueableHandler</td><td>2147483647</td><td>4988</td><td>Unknown</td><td>SystemLog</td><td>Application</td><td>536KCTQaWdLfdgmLtUZ9SF</td></tr>
<tr style="height:22px"><td><a>07LIg000002hq2hMAA</a></td><td>2025-05-22T11:15:57.000+0000</td><td class="jp">成功</td><td><a>0052w00000AAZTpAAP</a></td><td>QueueableHandler</td><td>2147483647</td><td>4993</td><td>Unknown</td><td>SystemLog</td><td>Application</td><td>536KCT5CPhTyoBmLtUU58F</td></tr>
<tr style="height:21px"><td><a>07LIg000002hq2IMAQ</a></td><td>2025-05-22T11:15:33.000+0000</td><td class="jp">成功</td><td><a>0052w00000AAZTpAAP</a></td><td>ApexModel.doLogin</td><td>234</td><td>698</td><td>Browser</td><td>SystemLog</td><td>Api</td><td>536KBdpBoUXC7BgmLtUYtWF</td></tr>
</tbody></table>
</div>
<!-- result scrollbar -->
<div class="abs" style="left:1892px;top:288px;width:15.8px;height:558px;background:#fcfcfc;border-radius:0 0 4px 0"></div>
<div class="abs" style="left:1896px;top:540px;width:8px;height:57px;background:#868686;border-radius:4px"></div>
<svg style="left:1895px;top:834px" width="10" height="7" viewBox="0 0 10 7"><path d="M0.5 0.5 H9.5 L5 6.5 Z" fill="#868686"/></svg>


<!-- side button -->
<div class="abs" style="left:1900px;top:69px;width:17px;height:33px;background:#fff;border-radius:4px 0 0 4px;box-shadow:-1px 1px 2px rgba(0,0,0,.35)"></div>
<div class="abs" style="left:1904px;top:73px;width:13px;height:25px;background:#216b87"></div>
<svg style="left:1907px;top:79px" width="8" height="13" viewBox="0 0 8 13"><defs><linearGradient id="tg" x1="0" y1="0" x2="1" y2="1"><stop offset="0" stop-color="#fff"/><stop offset="1" stop-color="#aaa"/></linearGradient></defs><path d="M0.6 6.5 L7.4 0.5 V12.5 Z" fill="url(#tg)"/></svg>

<!-- popup -->
<div class="abs" id="pop" style="left:1641px;top:102px;width:276px;height:450px;background:#fff;border-radius:4px 0 0 5px;box-shadow:-1px 0 4px rgba(0,0,0,.28);overflow:hidden">
 <div class="abs" style="left:0;top:0;width:276px;height:45px;background:#f3f3f3"></div>
 <svg style="left:12px;top:12.6px" width="23" height="23" viewBox="0 0 23 23"><circle cx="8.75" cy="8.5" r="7.3" fill="none" stroke="#0d2248" stroke-width="2.2"/><path d="M14.4 14.6 L20.3 20.2" stroke="#0d2248" stroke-width="3.3"/><circle cx="8.75" cy="4.9" r="1.3" fill="#0d2248"/><path d="M8.75 7.4 V12.4" stroke="#0d2248" stroke-width="2.3" stroke-linecap="round"/></svg>
 <div class="abs" style="left:48px;top:14px;line-height:20px;font-family:'Liberation Sans',sans-serif;font-size:14.3px;font-weight:bold;color:#0d2248;white-space:nowrap" id="ptitle">Salesforce Inspector Reloaded</div>
 <div class="abs" style="left:0;top:45px;width:276px;height:55px;background:#747474"></div>
 <div class="abs" style="left:0;top:53px;width:286px;text-align:center;line-height:20px;font-size:12.4px;color:#fff;white-space:nowrap;letter-spacing:-.19px" id="cv">Current Version: 1.25</div>
 <div class="abs" style="left:0;top:73px;width:286px;text-align:center;line-height:20px;font-size:12.4px;color:#fff;white-space:nowrap;letter-spacing:-.25px;-webkit-text-stroke:.25px #fff"><span style="text-decoration:underline" id="swn">See What's New</span></div>
 <svg style="left:249px;top:68px" width="11" height="11" viewBox="0 0 11 11"><path d="M1 1 L10 10 M10 1 L1 10" stroke="#fff" stroke-width="1.5"/></svg>
 <!-- tabs -->
 <div class="abs" style="left:8px;top:107px;width:58px;height:25px;border:1px solid #d8dde6;border-bottom:none;border-radius:4px 4px 0 0;background:#fff;font-size:11.4px;line-height:28px;text-align:center;color:#444;white-space:nowrap;letter-spacing:-.02px"><u>O</u>bjects</div>
 <div class="abs tab" style="left:65px;top:110px;width:43px;height:22px">​<i><u>U</u>sers</i></div>
 <div class="abs tab" style="left:108px;top:110px;width:65px;height:22px"><i><u>S</u>hortcuts</i></div>
 <div class="abs tab" style="left:172px;top:110px;width:35px;height:22px"><i>O<u>r</u>g</i></div>
 <div class="abs" style="left:8px;top:130px;width:247px;height:32px;border:1px solid #d8dde6;border-radius:4px;background:#fff;font-size:11.4px;letter-spacing:-.28px;line-height:30px;padding-left:5px;color:#6b6d70;white-space:nowrap">Record id, id prefix or object name<svg style="left:220px;top:13px" width="10" height="7" viewBox="0 0 10 7"><path d="M0 0 H10 L5 6.5 Z" fill="#4a5a85"/></svg></div>
 <div class="abs" style="left:0;top:238px;width:263px;text-align:center;line-height:20px;font-size:11.4px;letter-spacing:.3px;color:#54698d;white-space:nowrap">No record to display</div>
 <div class="abs" style="left:0;top:334px;width:263px;height:1px;background:#e2e2e2"></div>
 <div class="abs pbtn" style="left:8px;top:343px"><span style="letter-spacing:-.31px">Data <u>E</u>xport</span></div>
 <div class="abs pbtn" style="left:8px;top:379px"><span style="letter-spacing:-.15px">Data <u>I</u>mport</span></div>
 <!-- popup scrollbar -->
 <div class="abs" style="left:263px;top:100px;width:13px;height:313px;background:#fcfcfc"></div>
 <svg style="left:265px;top:105px" width="10" height="7" viewBox="0 0 10 7"><path d="M0.3 6.6 H9.7 L5 0.4 Z" fill="#868686"/></svg>
 <div class="abs" style="left:266px;top:118px;width:9px;height:134px;background:#868686;border-radius:4.5px"></div>
 <svg style="left:265px;top:402px" width="10" height="7" viewBox="0 0 10 7"><path d="M0.3 0.4 H9.7 L5 6.6 Z" fill="#868686"/></svg>
 <!-- footer -->
 <div class="abs" style="left:0;top:413px;width:276px;height:37px;background:#f3f3f3"></div>
 <div class="abs" style="left:8px;top:426px;line-height:14px;font-size:8.5px;letter-spacing:.12px;color:#080707;white-space:nowrap"><span style="color:#1b74d0">v1.25</span> /&nbsp; 62</div>
 <div class="abs" style="left:87px;top:426px;line-height:14px;font-size:8.5px;letter-spacing:-.3px;color:#080707;white-space:nowrap">[ctrl+alt+i] to open</div>
 <svg style="left:211px;top:425px" width="14" height="14" viewBox="0 0 14 14"><circle cx="7" cy="7" r="5.5" fill="none" stroke="#949494" stroke-width="1.4"/><circle cx="7" cy="4.6" r=".9" fill="#949494"/><path d="M6.1 6.5 H7.5 V9.7 M5.9 9.8 H8.4" fill="none" stroke="#949494" stroke-width="1.2"/></svg>
 <svg style="left:243px;top:425px" width="14" height="14" viewBox="0 0 14 14"><path d="M5.49 3.08 L6.12 0.76 L7.88 0.76 L8.51 3.08 L9.64 3.74 L11.96 3.12 L12.84 4.64 L11.15 6.34 L11.15 7.66 L12.84 9.36 L11.96 10.88 L9.64 10.26 L8.51 10.92 L7.88 13.24 L6.12 13.24 L5.49 10.92 L4.36 10.26 L2.04 10.88 L1.16 9.36 L2.85 7.66 L2.85 6.34 L1.16 4.64 L2.04 3.12 L4.36 3.74 Z" fill="#949494" stroke="#949494" stroke-width=".7" stroke-linejoin="round"/><circle cx="7" cy="7" r="3" fill="#f3f3f3"/><circle cx="7" cy="7" r="1.4" fill="#aaa"/></svg>
</div>

</div>
<!-- red annotations -->
<div class="abs" style="left:1893px;top:58.5px;width:38px;height:52px;border:6px solid #e6191d"></div>
<div class="abs" style="left:1639px;top:469px;width:269px;height:55px;border:6px solid #e6191d"></div>
</body></html>
